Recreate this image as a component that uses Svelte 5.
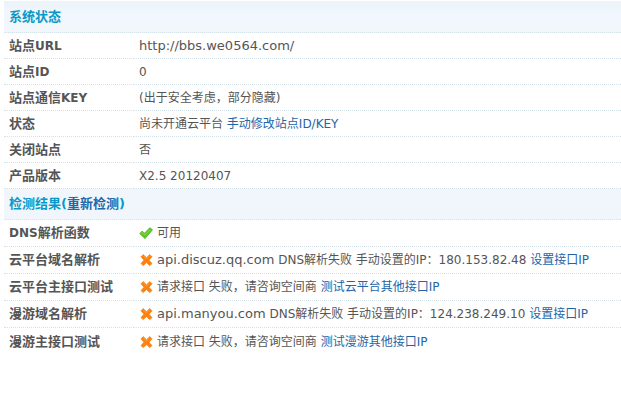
<script lang="ts">
  type Row = {
    label: string;
    text: string;
    host?: string;
    link?: string;
    ok?: boolean;
  };

  const status: Row[] = [
    { label: '站点URL', host: 'http://bbs.we0564.com/', text: '' },
    { label: '站点ID', text: '0' },
    { label: '站点通信KEY', text: '(出于安全考虑，部分隐藏)' },
    { label: '状态', text: '尚未开通云平台', link: '手动修改站点ID/KEY' },
    { label: '关闭站点', text: '否' },
    { label: '产品版本', text: 'X2.5 20120407' },
  ];

  const checks: Row[] = [
    { label: 'DNS解析函数', ok: true, text: '可用' },
    {
      label: '云平台域名解析',
      ok: false,
      host: 'api.discuz.qq.com',
      text: ' DNS解析失败 手动设置的IP：180.153.82.48',
      link: '设置接口IP',
    },
    {
      label: '云平台主接口测试',
      ok: false,
      text: '请求接口 失败，请咨询空间商',
      link: '测试云平台其他接口IP',
    },
    {
      label: '漫游域名解析',
      ok: false,
      host: 'api.manyou.com',
      text: ' DNS解析失败 手动设置的IP：124.238.249.10',
      link: '设置接口IP',
    },
    {
      label: '漫游主接口测试',
      ok: false,
      text: '请求接口 失败，请咨询空间商',
      link: '测试漫游其他接口IP',
    },
  ];

  // latin runs in the labels are set one size smaller than the hanzi
  function runs(label: string) {
    return label.split(/([A-Z]+)/).filter(Boolean);
  }
</script>

{#snippet row(item: Row)}
  <tr>
    <th scope="row">
      {#each runs(item.label) as part}{#if /[A-Z]/.test(part)}<span class="latin">{part}</span>{:else}{part}{/if}{/each}
    </th>
    <td>
      <div class="value">
        {#if item.ok === true}
          <svg class="icon" viewBox="0 0 14 14" role="img" aria-label="成功">
            <path d="M0.8 7.6 L3 5.2 L5.6 7.2 L10.8 1.8 L13.5 3.8 L6 12.6 Z" fill="#5cc820" stroke="#4aaa20" stroke-width="0.8" stroke-linejoin="round" />
            <path d="M2.3 7.2 L3.3 6.5 L5.8 9 L11.3 3.4" fill="none" stroke="#8ce04e" stroke-width="1" />
          </svg>
        {:else if item.ok === false}
          <svg class="icon" viewBox="0 0 14 14" role="img" aria-label="失败">
            <path d="M4.2 1.6 L7.5 4.8 L10.8 1.6 L13 3.8 L10 7.2 L13 10.6 L10.8 12.6 L7.5 9.6 L4.2 12.6 L2 10.6 L5 7.2 L2 3.8 Z" fill="#fb8210" stroke="#fb8210" stroke-width="0.8" stroke-linejoin="round" />
            <path d="M4.2 2.7 L7.5 6 L10.8 2.7" fill="none" stroke="#ff9c38" stroke-width="1" />
          </svg>
        {/if}
        <span>{#if item.host}<span class="host">{item.host}</span>{/if}{item.text}{#if item.link}{' '}<a href="#top">{item.link}</a>{/if}</span>
      </div>
    </td>
  </tr>
{/snippet}

<table>
  <tbody>
    <tr class="head">
      <th colspan="2" scope="colgroup">系统状态</th>
    </tr>
    {#each status as item}
      {@render row(item)}
    {/each}
  </tbody>
  <tbody class="checks">
    <tr class="head">
      <th colspan="2" scope="colgroup">检测结果(<a href="#top">重新检测</a>)</th>
    </tr>
    {#each checks as item}
      {@render row(item)}
    {/each}
  </tbody>
</table>

<style>
  :global(body) {
    background: #fff;
  }

  :global(#app) {
    padding: 1px 0 0 4px;
  }

  table {
    width: 100%;
    border-collapse: separate;
    border-spacing: 0;
    color: #555;
    font-family: 'DejaVu Sans', 'Noto Sans CJK SC', sans-serif;
    font-size: 12px;
    line-height: 16px;
  }

  th,
  td {
    box-sizing: border-box;
    height: 26px;
    padding: 0 0 0 5px;
    border-bottom: 1px dotted #d3e1ea;
    text-align: left;
    vertical-align: middle;
    white-space: nowrap;
  }

  th {
    width: 130px;
    font-size: 13px;
    font-weight: bold;
  }

  .latin {
    font-size: 12px;
  }

  .host {
    font-size: 13px;
  }

  .checks th,
  .checks td {
    height: 27px;
  }

  .checks tr:last-child > * {
    border-bottom: 0;
  }

  .head th {
    height: 32px;
    background: linear-gradient(#ebf4f9, #eff6fd 30%, #f2f7fc);
    color: #0999c8;
  }

  .checks .head th {
    height: 31px;
    background: #f0f6fc;
  }

  .value {
    display: flex;
    align-items: center;
    gap: 4px;
  }

  .icon {
    flex: none;
    width: 14px;
    height: 14px;
  }

  a {
    color: #2366a8;
    text-decoration: none;
  }
</style>
